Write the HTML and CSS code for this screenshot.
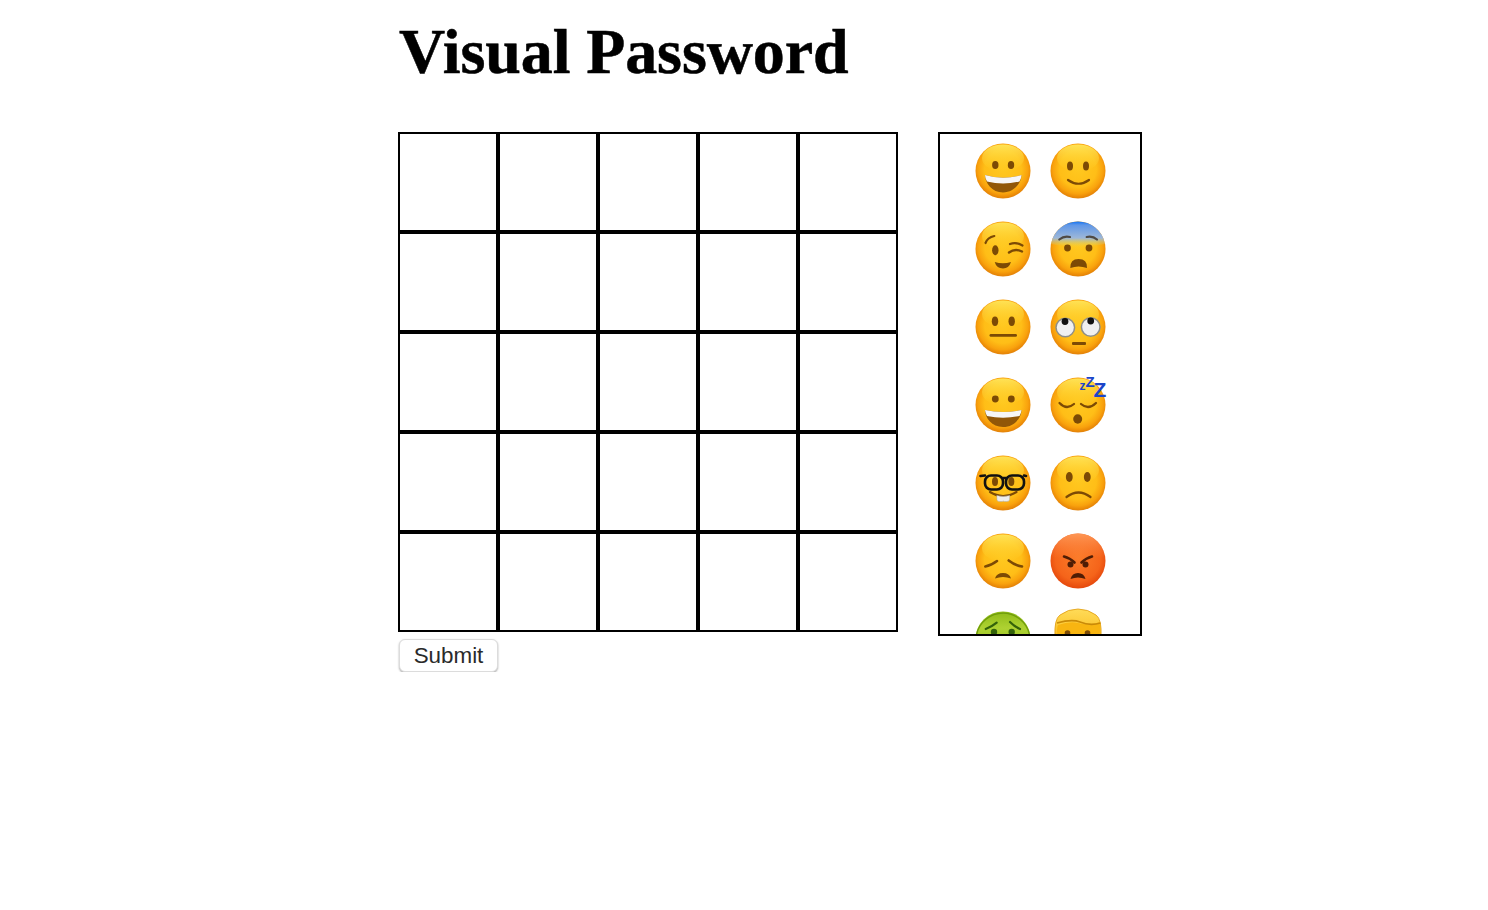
FILE: index.html

```html
<!DOCTYPE html>
<html>
  <head>
    <title>Visual Password</title>
    <link rel="stylesheet" href="styles.css">
  </head>
  <body>
    <!-- shared gradients and face shapes for the emoji -->
    <svg class="defs" aria-hidden="true">
      <defs>
        <radialGradient id="skin" cx="0.5" cy="0.46" r="0.54">
          <stop offset="0" stop-color="#ffc81f"/>
          <stop offset="0.62" stop-color="#ffbe17"/>
          <stop offset="0.84" stop-color="#f9a20d"/>
          <stop offset="0.96" stop-color="#e98807"/>
          <stop offset="1" stop-color="#e08410"/>
        </radialGradient>
        <linearGradient id="gloss" x1="0" y1="0" x2="0" y2="1">
          <stop offset="0" stop-color="#ffe75a" stop-opacity="0.95"/>
          <stop offset="1" stop-color="#ffd52e" stop-opacity="0"/>
        </linearGradient>
        <linearGradient id="fear" x1="0" y1="0" x2="0" y2="1">
          <stop offset="0" stop-color="#1373f2"/>
          <stop offset="0.14" stop-color="#5f97e8"/>
          <stop offset="0.65" stop-color="#9db7d8"/>
          <stop offset="1" stop-color="#e8d34c" stop-opacity="0"/>
        </linearGradient>
        <radialGradient id="rage" cx="0.5" cy="0.45" r="0.55">
          <stop offset="0" stop-color="#fb7c2a"/>
          <stop offset="0.75" stop-color="#f5641a"/>
          <stop offset="1" stop-color="#e5480c"/>
        </radialGradient>
        <linearGradient id="rageTop" x1="0" y1="0" x2="0" y2="1">
          <stop offset="0" stop-color="#ff9d5c" stop-opacity="0.9"/>
          <stop offset="0.45" stop-color="#ff8a45" stop-opacity="0"/>
        </linearGradient>
        <linearGradient id="sick" x1="0" y1="0" x2="0" y2="1">
          <stop offset="0" stop-color="#8fbb18"/>
          <stop offset="0.3" stop-color="#aed232"/>
          <stop offset="1" stop-color="#84b015"/>
        </linearGradient>
        <linearGradient id="hair" x1="0" y1="0" x2="0" y2="1">
          <stop offset="0" stop-color="#ffdb58"/>
          <stop offset="1" stop-color="#f8b008"/>
        </linearGradient>
        <g id="face">
          <circle cx="28" cy="28" r="27.5" fill="url(#skin)"/>
          <ellipse cx="28" cy="15" rx="21" ry="13.5" fill="url(#gloss)"/>
        </g>
      </defs>
    </svg>

    <div class="page">
      <h1>Visual Password</h1>
      <div class="board">
        <div class="left">
          <div class="grid">
            <div class="cell"></div><div class="cell"></div><div class="cell"></div><div class="cell"></div><div class="cell"></div>
            <div class="cell"></div><div class="cell"></div><div class="cell"></div><div class="cell"></div><div class="cell"></div>
            <div class="cell"></div><div class="cell"></div><div class="cell"></div><div class="cell"></div><div class="cell"></div>
            <div class="cell"></div><div class="cell"></div><div class="cell"></div><div class="cell"></div><div class="cell"></div>
            <div class="cell"></div><div class="cell"></div><div class="cell"></div><div class="cell"></div><div class="cell"></div>
          </div>
          <button type="button" class="submit">Submit</button>
        </div>

        <div class="emoji-list">
          <!-- grinning -->
          <svg class="emoji" viewBox="0 0 56 56">
            <use href="#face"/>
            <ellipse cx="20.3" cy="22" rx="3.2" ry="4" fill="#7c4a05"/>
            <ellipse cx="36" cy="22" rx="3.2" ry="4" fill="#7c4a05"/>
            <path d="M10 32Q28 37.5 46.5 32C46.5 40 39 49.5 28 49.5C17 49.5 10 40 10 32Z" fill="#915708"/>
            <path d="M10 32Q28 37.5 46.5 32Q46.5 35.5 44.5 38.500Q28 42.5 12 38.500Q10 35.5 10 32Z" fill="#f6f6f6"/>
          </svg>
          <!-- smile -->
          <svg class="emoji" viewBox="0 0 56 56">
            <use href="#face"/>
            <ellipse cx="20" cy="23" rx="3" ry="4.5" fill="#7c4a05"/>
            <ellipse cx="36" cy="23" rx="3" ry="4.5" fill="#7c4a05"/>
            <path d="M18 37Q28.5 44.5 39 37" fill="none" stroke="#7c4a05" stroke-width="2.2" stroke-linecap="round"/>
          </svg>
          <!-- wink -->
          <svg class="emoji" viewBox="0 0 56 56">
            <use href="#face"/>
            <path d="M10.5 22Q12.5 16.5 19.3 15" fill="none" stroke="#7c4a05" stroke-width="2.2" stroke-linecap="round"/>
            <ellipse cx="20.3" cy="29.3" rx="3.2" ry="5" fill="#7c4a05"/>
            <path d="M35 23Q41 20.5 47.5 24.5" fill="none" stroke="#7c4a05" stroke-width="2.2" stroke-linecap="round"/>
            <path d="M34 31.5Q40 27 47 30.5" fill="none" stroke="#7c4a05" stroke-width="2.4" stroke-linecap="round"/>
            <path d="M19.7 41Q28 43.5 36 41Q34 47.5 28 47.5Q21.5 47.5 19.7 41Z" fill="#7c4a05"/>
          </svg>
          <!-- fearful -->
          <svg class="emoji" viewBox="0 0 56 56">
            <use href="#face"/>
            <path d="M28 0.5A27.5 27.5 0 0 1 55 23Q28 29 1 23A27.5 27.5 0 0 1 28 0.5Z" fill="url(#fear)"/>
            <path d="M9.3 18.5Q14 14.5 20 16" fill="none" stroke="#4f4a44" stroke-width="2.2" stroke-linecap="round"/>
            <path d="M36.7 16Q42.5 14.5 47 18.5" fill="none" stroke="#4f4a44" stroke-width="2.2" stroke-linecap="round"/>
            <circle cx="17.5" cy="27" r="3.4" fill="#7c4a05"/>
            <circle cx="39" cy="27" r="3.4" fill="#7c4a05"/>
            <path d="M20.3 47Q20 38 28.5 38Q37.5 38 37 47Q28.5 44 20.3 47Z" fill="#7c4a05"/>
          </svg>
          <!-- neutral -->
          <svg class="emoji" viewBox="0 0 56 56">
            <use href="#face"/>
            <ellipse cx="20" cy="22.3" rx="3.2" ry="4.7" fill="#7c4a05"/>
            <ellipse cx="36.7" cy="22.3" rx="3.2" ry="4.7" fill="#7c4a05"/>
            <rect x="14.5" y="35" width="27.5" height="2.8" rx="1.4" fill="#7c4a05"/>
          </svg>
          <!-- rolling eyes -->
          <svg class="emoji" viewBox="0 0 56 56">
            <use href="#face"/>
            <circle cx="15.3" cy="28.5" r="9.3" fill="#f0f0f0" stroke="#8e8e88" stroke-width="1.5"/>
            <circle cx="40.7" cy="28" r="9.3" fill="#f0f0f0" stroke="#8e8e88" stroke-width="1.5"/>
            <circle cx="15" cy="22.5" r="3.4" fill="#111"/>
            <circle cx="40.7" cy="22" r="3.4" fill="#111"/>
            <rect x="22" y="43" width="14" height="3" rx="1" fill="#7c4a05"/>
          </svg>
          <!-- grinning, round eyes -->
          <svg class="emoji" viewBox="0 0 56 56">
            <use href="#face"/>
            <circle cx="20.3" cy="22" r="3.4" fill="#7c4a05"/>
            <circle cx="36.3" cy="22" r="3.4" fill="#7c4a05"/>
            <path d="M10 33Q28 37 46.5 33C46.5 41 39 50 28 50C17 50 10 41 10 33Z" fill="#915708"/>
            <path d="M10 33Q28 37 46.5 33Q46.3 36 44.5 39Q28 42.5 12 39Q10.3 36 10 33Z" fill="#f6f6f6"/>
          </svg>
          <!-- sleeping -->
          <svg class="emoji" viewBox="0 0 56 56">
            <use href="#face"/>
            <path d="M9.5 26Q16.5 33.5 24 27" fill="none" stroke="#7c4a05" stroke-width="2.3" stroke-linecap="round"/>
            <path d="M31 27Q38.5 33.5 46 26" fill="none" stroke="#7c4a05" stroke-width="2.3" stroke-linecap="round"/>
            <ellipse cx="27.7" cy="42" rx="4.5" ry="4.7" fill="#7c4a05"/>
            <text x="29.5" y="13" class="zzz zzz-s">z</text>
            <text x="35.5" y="10" class="zzz zzz-m">Z</text>
            <text x="43.5" y="19.5" class="zzz zzz-l">Z</text>
          </svg>
          <!-- nerd -->
          <svg class="emoji" viewBox="0 0 56 56">
            <use href="#face"/>
            <ellipse cx="20" cy="26.5" rx="3" ry="4.5" fill="#7c4a05"/>
            <ellipse cx="36.3" cy="26.5" rx="3" ry="4.5" fill="#7c4a05"/>
            <rect x="10" y="20.5" width="18" height="14" rx="6" fill="none" stroke="#111" stroke-width="2.6"/>
            <rect x="31" y="20.5" width="18" height="14" rx="6" fill="none" stroke="#111" stroke-width="2.6"/>
            <path d="M5.5 21L10 20.5M28 23H31M49 20.5L51 21" fill="none" stroke="#111" stroke-width="2.6" stroke-linecap="round"/>
            <path d="M15 37Q28 45 41.5 37" fill="none" stroke="#7c4a05" stroke-width="2.2" stroke-linecap="round"/>
            <path d="M21.8 40.5Q28 42.3 34.8 40.5L34.5 45Q34 46.5 31.5 46.5Q28.3 46.7 28.3 46Q28 46.7 25 46.5Q22.3 46.5 22 45Z" fill="#eee" stroke="#aaa" stroke-width="0.5"/>
          </svg>
          <!-- frowning -->
          <svg class="emoji" viewBox="0 0 56 56">
            <use href="#face"/>
            <ellipse cx="19.3" cy="22" rx="3.4" ry="5" fill="#7c4a05"/>
            <ellipse cx="37.3" cy="22" rx="3.4" ry="5" fill="#7c4a05"/>
            <path d="M16.5 42Q28.5 33 40.5 42" fill="none" stroke="#7c4a05" stroke-width="2.2" stroke-linecap="round"/>
          </svg>
          <!-- disappointed -->
          <svg class="emoji" viewBox="0 0 56 56">
            <use href="#face"/>
            <path d="M10.3 33.5Q16 32.5 22 28" fill="none" stroke="#7c4a05" stroke-width="2.6" stroke-linecap="round"/>
            <path d="M33.7 27.5Q40 32.5 47 33.5" fill="none" stroke="#7c4a05" stroke-width="2.6" stroke-linecap="round"/>
            <path d="M20 45.5Q21.5 40 28 40Q34.5 40 36 45.5Q28 42.5 20 45.5Z" fill="#7c4a05"/>
          </svg>
          <!-- angry -->
          <svg class="emoji" viewBox="0 0 56 56">
            <circle cx="28" cy="28" r="27.5" fill="url(#rage)"/>
            <circle cx="28" cy="28" r="27.5" fill="url(#rageTop)"/>
            <path d="M14 23.5Q20 25 24.5 29.5" fill="none" stroke="#4f1d05" stroke-width="2.6" stroke-linecap="round"/>
            <path d="M42 23.5Q36 25 31.5 29.5" fill="none" stroke="#4f1d05" stroke-width="2.6" stroke-linecap="round"/>
            <circle cx="20.5" cy="31.5" r="3" fill="#4f1d05"/>
            <circle cx="35.5" cy="31.5" r="3" fill="#4f1d05"/>
            <path d="M20.5 46Q22 40 28 40Q34 40 35.5 46Q28 43 20.5 46Z" fill="#4f1d05"/>
          </svg>
          <!-- nauseated -->
          <svg class="emoji" viewBox="0 0 56 56">
            <circle cx="28" cy="28" r="27.5" fill="url(#sick)"/>
            <path d="M1.5 24A27 27 0 0 1 54.5 24" fill="none" stroke="#6f9c0c" stroke-width="1.4"/>
            <path d="M10.7 18Q16.5 16 21.7 11.7" fill="none" stroke="#33620a" stroke-width="2.2" stroke-linecap="round"/>
            <path d="M35 11Q40 16 45 18" fill="none" stroke="#33620a" stroke-width="2.2" stroke-linecap="round"/>
            <circle cx="19" cy="21" r="3.2" fill="#33620a"/>
            <circle cx="36.7" cy="21" r="3.2" fill="#33620a"/>
          </svg>
          <!-- blond hair -->
          <svg class="emoji" viewBox="0 0 56 56">
            <path d="M5 26Q4 8 10 4Q18 -2 28 -2Q38 -2 46 4Q52 8 51 26Q46 40 28 40Q10 40 5 26Z" fill="url(#hair)" stroke="#e09a0c" stroke-width="0.8"/>
            <path d="M8 14Q20 10 28 12Q40 15 50 11Q51 18 49 26L8 26Q6 18 8 14Z" fill="#f8b511"/>
            <path d="M7 12Q22 8 30 11Q40 15 50.5 12" fill="none" stroke="#c98a08" stroke-width="1.8"/>
            <circle cx="17.5" cy="22" r="2.8" fill="#7c4a05"/>
            <circle cx="37.5" cy="22" r="2.8" fill="#7c4a05"/>
          </svg>
        </div>
      </div>
    </div>
  </body>
</html>
```

FILE: styles.css

```css
body {
  margin: 0;
  background-color: #ffffff;
  font-family: "Liberation Serif", serif;
}

.defs {
  position: absolute;
  width: 0;
  height: 0;
}

.page {
  padding-left: 398px;
}

h1 {
  font-size: 64px;
  font-weight: bold;
  letter-spacing: -0.1px;
  margin: 15px 0 43px 1px;
  color: #000000;
  -webkit-text-stroke: 0.5px #000000;
}

.board {
  display: flex;
  align-items: flex-start;
  gap: 40px;
}

.grid {
  display: grid;
  grid-template-columns: repeat(5, 100px);
  grid-auto-rows: 100px;
}

.cell {
  box-sizing: border-box;
  border: 2px solid #000000;
}

.submit {
  display: block;
  box-sizing: border-box;
  width: 99px;
  height: 33px;
  margin: 7px 0 0 1px;
  padding: 1px 0 0 0;
  font-family: "Liberation Sans", sans-serif;
  font-size: 22.4px;
  color: #2a2a2a;
  background-color: #ffffff;
  border: 1px solid #dcdcdc;
  border-radius: 6px;
  box-shadow: 0 1px 2px rgba(0, 0, 0, 0.35);
}

.emoji-list {
  box-sizing: border-box;
  width: 204px;
  height: 504px;
  padding: 9px 0 0 1px;
  border: 2px solid #000000;
  overflow: hidden;
  display: grid;
  grid-template-columns: 56px 56px;
  grid-auto-rows: 56px;
  gap: 22px 19px;
  justify-content: center;
}

.emoji {
  display: block;
  width: 56px;
  height: 56px;
  overflow: visible;
}

.zzz {
  font-family: "Liberation Sans", sans-serif;
  font-weight: bold;
  fill: #1c45c9;
}

.zzz-s {
  font-size: 12px;
}

.zzz-m {
  font-size: 15px;
}

.zzz-l {
  font-size: 21px;
}
```
